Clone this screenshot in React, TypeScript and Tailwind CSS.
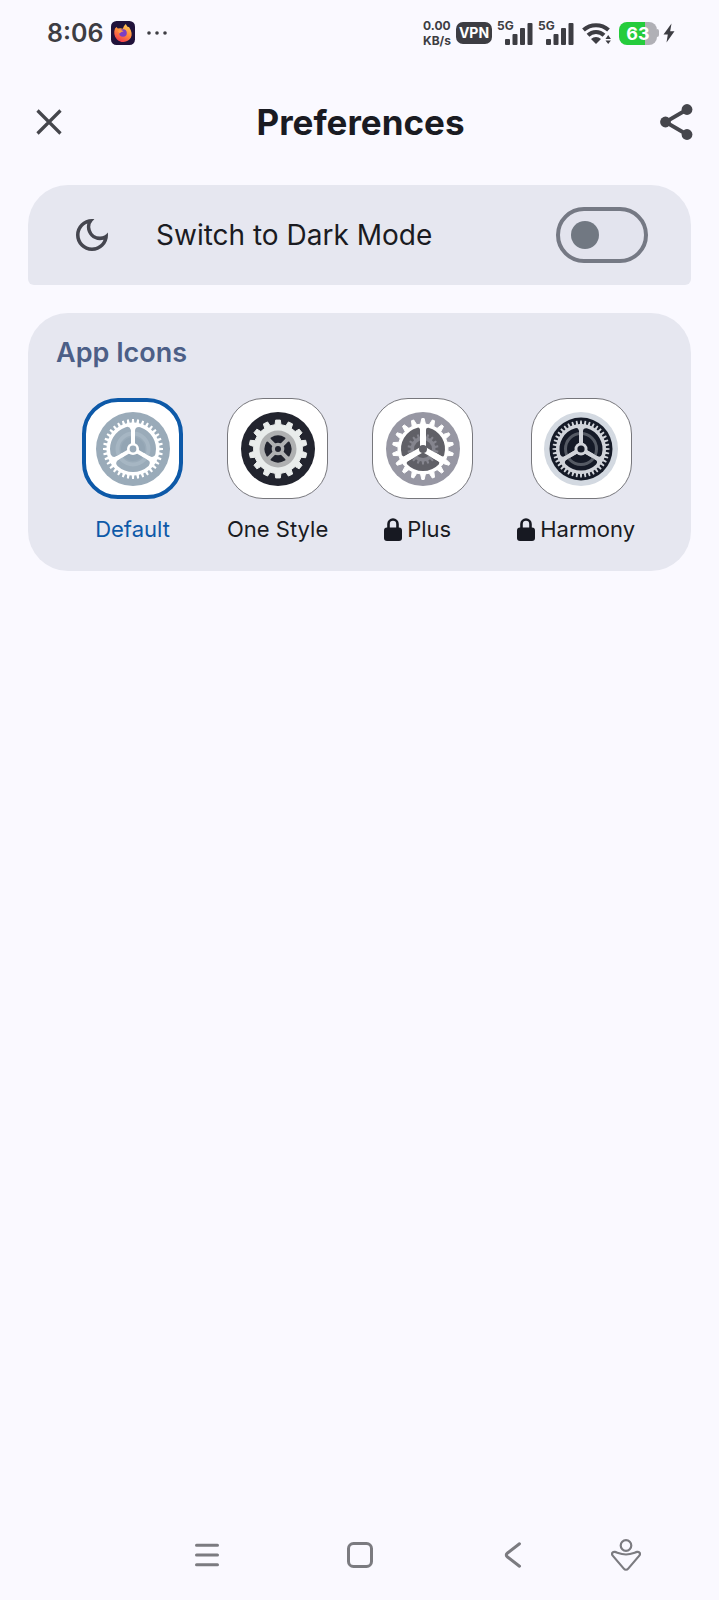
import { useState } from 'react'
import type { ReactNode } from 'react'
import clsx from 'clsx'

type IconId = 'default' | 'onestyle' | 'plus' | 'harmony'

interface AppIcon {
  id: IconId
  label: string
  locked: boolean
  art: ReactNode
}

const rad = (deg: number) => (deg * Math.PI) / 180
const pt = (r: number, deg: number) => `${(r * Math.sin(rad(deg))).toFixed(2)} ${(-r * Math.cos(rad(deg))).toFixed(2)}`

// toothed wheel outline, a tooth always points straight up
function gear(teeth: number, outer: number, root: number, tip = 0.36, base = 0.56) {
  const step = 360 / teeth
  const points: string[] = []
  for (let i = 0; i < teeth; i++) {
    const a = i * step
    points.push(pt(root, a - (step * base) / 2))
    points.push(pt(outer, a - (step * tip) / 2))
    points.push(pt(outer, a + (step * tip) / 2))
    points.push(pt(root, a + (step * base) / 2))
  }
  return `M${points.join('L')}Z`
}

// openings left between the spokes, rounded off by a stroke of 2 * round
function openings(count: number, radius: number, spoke: number, round: number, start = 0) {
  const step = 360 / count
  const gap = spoke / 2 + round
  const r = radius - round
  const off = (Math.asin(gap / r) * 180) / Math.PI
  const inner = gap / Math.sin(rad(step / 2))
  let d = ''
  for (let i = 0; i < count; i++) {
    const a = start + i * step
    d += `M${pt(inner, a + step / 2)}L${pt(r, a + off)}A${r} ${r} 0 0 1 ${pt(r, a + step - off)}Z`
  }
  return d
}

function DefaultArt() {
  return (
    <svg viewBox="-37 -37 74 74" className="size-[74px]" aria-hidden="true">
      <circle r="37" fill="#9aabb9" />
      <path d={gear(36, 30, 26.5)} fill="#fff" />
      <path d={openings(3, 23, 4, 4)} fill="#9aabb9" stroke="#9aabb9" strokeWidth="8" strokeLinejoin="round" />
      <circle r="15.5" fill="none" stroke="#a6b6c3" strokeWidth="4" />
      <circle r="12" fill="#93a5b4" />
      <path d={`M0 0L${pt(24, 0)}M0 0L${pt(24, 120)}M0 0L${pt(24, 240)}`} stroke="#fff" strokeWidth="4" />
      <circle r="6" fill="#fff" />
      <circle r="3.4" fill="#9aabb9" />
    </svg>
  )
}

function OneStyleArt() {
  return (
    <svg viewBox="-37 -37 74 74" className="size-[74px]" aria-hidden="true">
      <circle r="37" fill="#22242e" />
      <path d={gear(14, 29, 24.5, 0.36, 0.54)} fill="#e9eceb" stroke="#e9eceb" strokeLinejoin="round" />
      <circle r="18.5" fill="#afb0b1" />
      <path d={openings(4, 13.5, 4, 1, 45)} fill="#22242e" stroke="#22242e" strokeWidth="2" strokeLinejoin="round" />
      <circle r="6.3" fill="#afb0b1" />
      <circle r="3" fill="#22242e" />
    </svg>
  )
}

function PlusArt() {
  return (
    <svg viewBox="-37 -37 74 74" className="size-[74px]" aria-hidden="true">
      <circle r="37" fill="#9797a3" />
      <path d={gear(18, 30.5, 25, 0.22, 0.56)} fill="#fff" stroke="#fff" strokeLinejoin="round" />
      <path d={openings(3, 22, 6, 2)} fill="#606067" stroke="#606067" strokeWidth="4" strokeLinejoin="round" />
      <path d={gear(18, 15.5, 12.5)} fill="#85858e" />
      <circle r="9" fill="#606067" />
      <path d={`M0 0L${pt(23, 0)}M0 0L${pt(23, 120)}M0 0L${pt(23, 240)}`} stroke="#fff" strokeWidth="6" />
      <circle r="4" fill="#606067" />
    </svg>
  )
}

function HarmonyArt() {
  return (
    <svg viewBox="-37 -37 74 74" className="size-[74px]" aria-hidden="true">
      <circle r="37" fill="#d3d9e1" />
      <circle r="31.5" fill="#151a27" />
      <path d={gear(40, 28.5, 25)} fill="#d0d3d9" />
      <path d={openings(3, 21.5, 4, 3)} fill="#151a27" stroke="#151a27" strokeWidth="6" strokeLinejoin="round" />
      <circle r="15.5" fill="none" stroke="#555a64" strokeWidth="3" />
      <path d={`M0 0L${pt(22, 0)}M0 0L${pt(22, 120)}M0 0L${pt(22, 240)}`} stroke="#d0d3d9" strokeWidth="4" />
      <circle r="6.5" fill="#d0d3d9" />
      <circle r="3.6" fill="#151a27" />
    </svg>
  )
}

const APP_ICONS: AppIcon[] = [
  { id: 'default', label: 'Default', locked: false, art: <DefaultArt /> },
  { id: 'onestyle', label: 'One Style', locked: false, art: <OneStyleArt /> },
  { id: 'plus', label: 'Plus', locked: true, art: <PlusArt /> },
  { id: 'harmony', label: 'Harmony', locked: true, art: <HarmonyArt /> },
]

export default function App() {
  const [dark, setDark] = useState(false)
  const [selected, setSelected] = useState<IconId>('default')

  return (
    <div className="min-h-screen flex flex-col bg-[#faf9ff] text-[#1a1b22] font-['Inter',sans-serif]">
      <StatusBar />

      <header className="h-28 pl-9 pr-[26px] flex items-center justify-between">
        <button aria-label="Close" className="text-[#45464c]">
          <svg viewBox="0 0 26 26" className="size-[26px]" fill="none" stroke="currentColor" strokeWidth="3.2">
            <path d="M1.5 1.5L24.5 24.5M24.5 1.5L1.5 24.5" />
          </svg>
        </button>
        <h1 className="text-[35px] leading-[44px] font-bold">Preferences</h1>
        <button aria-label="Share" className="text-[#45464c]">
          <svg viewBox="0 0 34 36" className="w-[34px] h-9" fill="currentColor">
            <path d="M28 5.5L6.5 18L28 30.5" fill="none" stroke="currentColor" strokeWidth="3.8" />
            <circle cx="28" cy="5.5" r="5.4" />
            <circle cx="6.5" cy="18" r="5.4" />
            <circle cx="28" cy="30.5" r="5.4" />
          </svg>
        </button>
      </header>

      <main className="px-7 pt-[7px] flex flex-col gap-7">
        <label className="h-[100px] pl-12 pr-[43px] flex items-center rounded-t-[40px] rounded-b-[6px] bg-[#e6e7f0]">
          <svg viewBox="3 3 18 18" className="size-8 text-[#45464f]" fill="currentColor" aria-hidden="true">
            <path d="M9.37 5.51c-.18.64-.27 1.31-.27 1.99 0 4.08 3.32 7.4 7.4 7.4.68 0 1.35-.09 1.99-.27C17.45 17.19 14.93 19 12 19c-3.86 0-7-3.14-7-7 0-2.93 1.81-5.45 4.37-6.49zM12 3a9 9 0 1 0 9 9c0-.46-.04-.92-.1-1.36a5.389 5.389 0 0 1-4.4 2.26 5.403 5.403 0 0 1-3.14-9.8c-.44-.06-.9-.1-1.36-.1z" />
          </svg>
          <span className="ml-12 flex-1 text-[28px] leading-9">Switch to Dark Mode</span>
          <input
            type="checkbox"
            role="switch"
            checked={dark}
            onChange={(e) => setDark(e.target.checked)}
            className="appearance-none w-[92px] h-14 px-[11px] flex items-center rounded-full border-4 border-[#757984] bg-[#e3e4ee] before:size-7 before:rounded-full before:bg-[#717882] checked:justify-end"
          />
        </label>

        <section className="h-[258px] pt-5 rounded-[40px] bg-[#e6e7f0] overflow-hidden">
          <h2 className="pl-7 text-[27px] leading-10 font-semibold text-[#4c5f87]">App Icons</h2>
          <div className="mt-[25px] pl-[54px] flex gap-11">
            {APP_ICONS.map((icon) => (
              <IconOption
                key={icon.id}
                icon={icon}
                active={icon.id === selected}
                onSelect={() => setSelected(icon.id)}
              />
            ))}
          </div>
        </section>
      </main>

      <NavBar />
    </div>
  )
}

interface IconOptionProps {
  icon: AppIcon
  active: boolean
  onSelect: () => void
}

function IconOption({ icon, active, onSelect }: IconOptionProps) {
  return (
    <button onClick={onSelect} aria-pressed={active} className="shrink-0 flex flex-col items-center gap-3">
      <span
        className={clsx(
          'size-[101px] flex items-center justify-center rounded-[36px] bg-white',
          active ? 'border-4 border-[#0d59a8]' : 'border border-[#77777c]',
        )}
      >
        {icon.art}
      </span>
      <span
        className={clsx(
          'h-9 flex items-center text-[22px] leading-9',
          active && 'text-[#0d59a8]',
          icon.locked && 'gap-[5px] pr-2.5',
        )}
      >
        {icon.locked && <Lock />}
        {icon.label}
      </span>
    </button>
  )
}

function Lock() {
  return (
    <svg viewBox="0 0 18 23" className="w-[18px] h-[23px]" aria-label="Locked">
      <path d="M4.5 12V6a4.5 4.5 0 0 1 9 0v6" fill="none" stroke="#171922" strokeWidth="2.6" />
      <rect y="9.5" width="18" height="13.5" rx="3" fill="#171922" />
    </svg>
  )
}

function StatusBar() {
  return (
    <div className="h-[66px] pl-[47px] pr-11 flex items-center text-[#3d3d43]">
      <span className="text-[25px] leading-8 font-semibold">8:06</span>
      <svg viewBox="0 0 24 24" className="ml-2 size-6" aria-hidden="true">
        <defs>
          <linearGradient id="flame" x1="0.8" y1="0" x2="0.3" y2="1">
            <stop offset="0" stopColor="#ffd05a" />
            <stop offset="0.5" stopColor="#ff8a3c" />
            <stop offset="1" stopColor="#f0364f" />
          </linearGradient>
        </defs>
        <rect width="24" height="24" rx="5.5" fill="#20123a" />
        <path
          d="M4 7.500L5.500 6l1.300 1.600 2.600-.4 2.400.6L13 5l1.800-2 1.400 2.600 2 .6 1.600 3c1.600 3.600 1 7-1.400 9.400-3.600 3.400-9.400 3.200-12.600-.4C3 15 2.600 11 4 7.500z"
          fill="url(#flame)"
        />
        <circle cx="12" cy="12" r="3.800" fill="#7c3fc4" />
        <path d="M7 10c2-1.600 4-1 5.500.5-2.500 0-2.800 1.500-4 2z" fill="#ff9a45" />
      </svg>
      <svg viewBox="0 0 20 4" className="ml-3 w-5 h-1" fill="currentColor" aria-hidden="true">
        <circle cx="2" cy="2" r="1.8" />
        <circle cx="10" cy="2" r="1.8" />
        <circle cx="18" cy="2" r="1.8" />
      </svg>

      <div className="ml-auto flex items-center">
        <div className="w-[33px] text-[12px] leading-[15px] font-bold">
          <div>0.00</div>
          <div>KB/s</div>
        </div>
        <span className="w-9 h-[22px] flex items-center justify-center rounded-[7px] bg-[#3d3d43] text-white text-[14px] leading-[22px] font-bold">
          VPN
        </span>
        <Signal />
        <Signal />
        <svg viewBox="0 0 30 22" className="ml-2 w-[30px] h-[22px]" aria-hidden="true">
          <path d="M1.500 8a18.500 18.500 0 0 1 25 0" fill="none" stroke="currentColor" strokeWidth="4" />
          <path d="M6 13.300a11.500 11.500 0 0 1 16 0" fill="none" stroke="currentColor" strokeWidth="4" />
          <path d="M9 17a7.500 7.500 0 0 1 10 0L14 22z" fill="currentColor" />
          <path d="M23.500 17L26.200 13l2.700 4zM23.500 18.400h5.400L26.200 22z" fill="currentColor" />
        </svg>
        <div className="ml-[7px] flex items-center">
          <span className="w-[38px] h-[23px] flex items-center justify-center rounded-[8px] bg-linear-to-r from-[#25cc3c] from-68% to-[#b0b0b6] to-68% text-white text-[18px] leading-[23px] font-bold">
            63
          </span>
          <span className="w-0.5 h-2 rounded-r-full bg-[#b0b0b6]" />
        </div>
        <svg viewBox="0 0 12 20" className="ml-1 w-3 h-5" fill="currentColor" aria-label="Charging">
          <path d="M8.500 0.500L0.500 11.500h4.300L3.500 19.500L11.500 8.200H7.200z" />
        </svg>
      </div>
    </div>
  )
}

function Signal() {
  return (
    <div className="relative ml-[5px] w-9 h-6 flex items-end justify-end">
      <span className="absolute -top-0.5 left-0 text-[12px] leading-[14px] font-bold">5G</span>
      <svg viewBox="0 0 28 22" className="w-7 h-[22px]" fill="currentColor" aria-hidden="true">
        <rect x="0" y="16" width="5" height="6" rx="1" />
        <rect x="7.500" y="11" width="5" height="11" rx="1" />
        <rect x="15" y="5" width="5" height="17" rx="1" />
        <rect x="22.500" y="0" width="5" height="22" rx="1" />
      </svg>
    </div>
  )
}

function NavBar() {
  return (
    <nav className="mt-auto h-[90px] grid grid-cols-[1fr_153px_153px_153px_1fr] items-center justify-items-center text-[#7b7b80]">
      <button aria-label="Recent apps" className="col-start-2">
        <svg viewBox="0 0 26 26" className="size-[26px]" fill="none" stroke="currentColor" strokeWidth="3" strokeLinecap="round">
          <path d="M2.500 3.200h21M2.500 13h21M2.500 22.800h21" />
        </svg>
      </button>
      <button aria-label="Home">
        <svg viewBox="0 0 26 26" className="size-[26px]" fill="none" stroke="currentColor" strokeWidth="3">
          <rect x="1.500" y="1.500" width="23" height="23" rx="5" />
        </svg>
      </button>
      <button aria-label="Back">
        <svg viewBox="0 0 18 26" className="w-[18px] h-[26px]" fill="none" stroke="currentColor" strokeWidth="3" strokeLinecap="round">
          <path d="M15.500 1.800L3.500 11Q1 13 3.500 15L15.500 24.200" />
        </svg>
      </button>
      <button aria-label="Accessibility" className="justify-self-start pl-[22px]">
        <svg viewBox="0 0 30 32" className="w-[30px] h-8" fill="none" stroke="currentColor" strokeWidth="2.200" strokeLinejoin="round">
          <circle cx="15" cy="6.500" r="5.300" />
          <path d="M3.800 12.900C7 13.800 10 15.500 15 15.500S23 13.800 26.200 12.900C28.600 12.400 29.800 14.800 28.300 16.600L17.200 29.600C16 31.100 14 31.100 12.800 29.600L1.700 16.600C0.200 14.800 1.400 12.400 3.800 12.900Z" />
        </svg>
      </button>
    </nav>
  )
}
